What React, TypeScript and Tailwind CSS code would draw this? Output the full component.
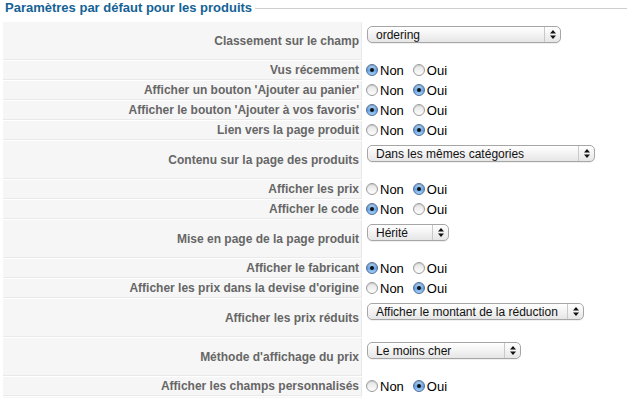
import React from "react";

type Row =
  | { label: string; kind: "radio"; sel: 0 | 1 }
  | { label: string; kind: "empty" }
  | { label: string; kind: "select"; value: string; width: number };

const rows: Row[] = [
  { label: "Classement sur le champ", kind: "select", value: "ordering", width: 194 },
  { label: "Vus récemment", kind: "radio", sel: 0 },
  { label: "Afficher un bouton 'Ajouter au panier'", kind: "radio", sel: 1 },
  { label: "Afficher le bouton 'Ajouter à vos favoris'", kind: "radio", sel: 0 },
  { label: "Lien vers la page produit", kind: "radio", sel: 1 },
  { label: "Contenu sur la page des produits", kind: "select", value: "Dans les mêmes catégories", width: 228 },
  { label: "Afficher les prix", kind: "radio", sel: 1 },
  { label: "Afficher le code", kind: "radio", sel: 0 },
  { label: "Mise en page de la page produit", kind: "select", value: "Hérité", width: 82 },
  { label: "Afficher le fabricant", kind: "radio", sel: 0 },
  { label: "Afficher les prix dans la devise d'origine", kind: "radio", sel: 1 },
  { label: "Afficher les prix réduits", kind: "select", value: "Afficher le montant de la réduction", width: 217 },
  { label: "Méthode d'affichage du prix", kind: "select", value: "Le moins cher", width: 154 },
  { label: "Afficher les champs personnalisés", kind: "radio", sel: 1 },
  { label: "", kind: "empty" },
];

function Radio({ on }: { on: boolean }) {
  return on ? (
    <span className="relative inline-flex h-[12px] w-[12px] shrink-0 items-center justify-center rounded-full border border-[#4b6d9c] bg-[linear-gradient(#b9d9f7,#6aa6e6_55%,#a9d0f6)] shadow-[inset_0_1px_1px_rgba(0,0,0,0.25)]">
      <span className="h-[4px] w-[4px] rounded-full bg-[#111]" />
    </span>
  ) : (
    <span className="inline-block h-[12px] w-[12px] shrink-0 rounded-full border border-[#9c9c9c] bg-[linear-gradient(#e4e4e4,#fdfdfd)] shadow-[inset_0_1px_1px_rgba(0,0,0,0.12)]" />
  );
}

function Select({ value, width }: { value: string; width: number }) {
  return (
    <div
      className="ml-px flex h-[17px] items-stretch rounded-[5px] border border-[#a6a6a6] bg-[linear-gradient(#ffffff,#f3f3f3_50%,#e6e6e6)] shadow-[0_1px_0_rgba(0,0,0,0.06)]"
      style={{ width }}
    >
      <div className="flex flex-1 items-center pl-[8px] text-[12px] leading-none text-[#111]">
        {value}
      </div>
      <div className="flex w-[16px] items-center justify-center border-l border-[#c9c9c9]">
        <svg width="6" height="9" viewBox="0 0 6 9">
          <path d="M0 3.5 L3 0 L6 3.5 Z" fill="#111" />
          <path d="M0 5.5 L3 9 L6 5.5 Z" fill="#111" />
        </svg>
      </div>
    </div>
  );
}

export default function App() {
  return (
    <div
      className="h-[398px] w-[627px] overflow-hidden bg-white"
      style={{ fontFamily: '"Liberation Sans", Arial, sans-serif' }}
    >
      <div className="flex h-[16px] items-center pl-[5px]">
        <span className="text-[13px] font-bold leading-[16px] text-[#146295]">
          Paramètres par défaut pour les produits
        </span>
        <div className="ml-[3px] h-px flex-1 bg-[#cfcfcf]" />
      </div>
      <div className="mt-[6px] flex flex-col gap-px pl-[3px]">
        {rows.map((r, i) => {
          const tall = r.kind === "select";
          return (
            <div key={i} className="flex">
              <div
                className={`flex w-[359px] shrink-0 items-center justify-end border-r border-b border-[#e9e9e9] bg-[#f6f6f6] pr-[2px] text-[12px] font-bold text-[#666] ${
                  tall ? "h-[38px]" : "h-[19px]"
                }`}
              >
                <span className="whitespace-nowrap leading-none">{r.label}</span>
              </div>
              {r.kind === "radio" && (
                <div className="flex h-[18px] items-center pl-[4px] text-[13px] leading-none text-black">
                  <Radio on={r.sel === 0} />
                  <span className="ml-[2px]">Non</span>
                  <span className="ml-[9px] flex items-center">
                    <Radio on={r.sel === 1} />
                  </span>
                  <span className="ml-[2px]">Oui</span>
                </div>
              )}
              {r.kind === "select" && (
                <div className="pl-[4px] pt-[4px]">
                  <Select value={r.value} width={r.width} />
                </div>
              )}
            </div>
          );
        })}
      </div>
    </div>
  );
}
